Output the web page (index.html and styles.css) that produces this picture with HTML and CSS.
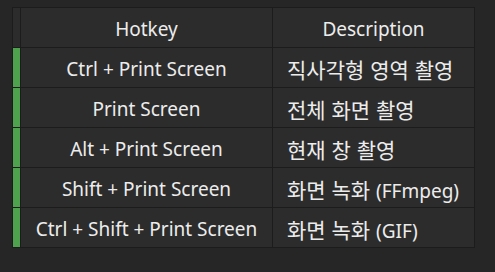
FILE: index.html
```html
<!DOCTYPE html>
<html lang="ko">
<head>
<meta charset="utf-8">
<link rel="stylesheet" href="styles.css">
</head>
<body>
<table class="hotkeys">
  <thead>
    <tr><th class="mark"></th><th class="key">Hotkey</th><th class="desc">Description</th></tr>
  </thead>
  <tbody>
    <tr><td class="mark on"></td><td class="key">Ctrl + Print Screen</td><td class="desc"><span class="ko">직사각형 영역 촬영</span></td></tr>
    <tr><td class="mark on"></td><td class="key">Print Screen</td><td class="desc"><span class="ko">전체 화면 촬영</span></td></tr>
    <tr><td class="mark on"></td><td class="key">Alt + Print Screen</td><td class="desc"><span class="ko">현재 창 촬영</span></td></tr>
    <tr><td class="mark on"></td><td class="key">Shift + Print Screen</td><td class="desc"><span class="ko">화면 녹화 </span>(FFmpeg)</td></tr>
    <tr><td class="mark on"></td><td class="key">Ctrl + Shift + Print Screen</td><td class="desc"><span class="ko">화면 녹화 </span>(GIF)</td></tr>
  </tbody>
</table>
</body>
</html>
```
FILE: styles.css
```css
html, body {
  margin: 0;
  background: #262626;
}
body {
  padding: 7px 0 0 12px;
  font-family: "Noto Sans", "Noto Sans CJK KR", sans-serif;
  font-size: 19px;
  color: #ececec;
}
.hotkeys {
  border-collapse: collapse;
  width: 463px;
  table-layout: fixed;
}
.hotkeys th, .hotkeys td {
  border: 1px solid #1c1c1c;
  background: #2c2c2c;
  height: 35px;
  padding: 4px 0 0 0;
  font-weight: normal;
  white-space: nowrap;
  line-height: 1;
}
.hotkeys th.mark, .hotkeys td.mark { width: 7px; }
.hotkeys td.mark.on { background: #4ea24e; }
.hotkeys .key { width: 251px; text-align: center; }
.hotkeys th.desc { text-align: center; }
.hotkeys td.desc { text-align: left; padding-left: 14px; }
.ko {
  font-family: "Noto Sans CJK KR", sans-serif;
  font-size: 21px;
}
```
